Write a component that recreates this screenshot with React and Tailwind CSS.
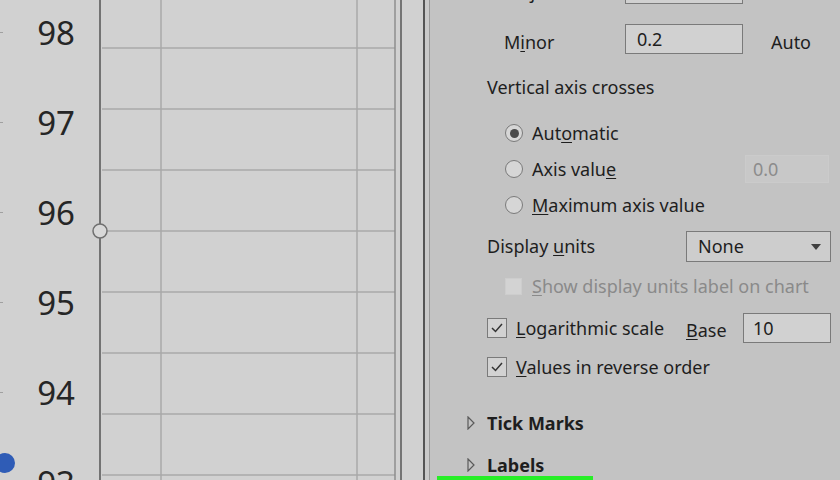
import React from 'react';

const ticks = ['98', '97', '96', '95', '94', '93'];
const gridY = [48, 109, 170, 231, 292, 353, 414, 475];

const Radio = ({ checked }) => (
  <span className="flex-none w-[18px] h-[18px] rounded-full border border-[#7a7a7a] bg-[#d6d6d6] flex items-center justify-center">
    {checked && <span className="w-[9px] h-[9px] rounded-full bg-[#4a4a4a]" />}
  </span>
);

const Check = ({ checked, disabled }) =>
  disabled ? (
    <span className="flex-none w-[17px] h-[17px] bg-[#d3d3d3] border border-[#cdcdcd]" />
  ) : (
    <span className="flex-none w-[20px] h-[20px] border border-[#7a7a7a] bg-[#d2d2d2] flex items-center justify-center">
      {checked && (
        <svg width="14" height="14" viewBox="0 0 14 14">
          <polyline points="2,7 5.5,10.5 12,3" fill="none" stroke="#333" strokeWidth="1.5" />
        </svg>
      )}
    </span>
  );

const Caret = () => (
  <svg width="8" height="14" viewBox="0 0 8 14" className="flex-none">
    <polygon points="1,1 7,7 1,13" fill="none" stroke="#5a5a5a" strokeWidth="1.2" />
  </svg>
);

const App = () => {
  return (
    <div className="w-[840px] h-[480px] overflow-hidden flex bg-[#d1d1d1] text-[#1e1e1e] font-['Noto_Sans',sans-serif] relative">
      {/* chart side */}
      <div className="flex-none w-[423px] flex relative">
        <div className="flex-none w-[100px] flex flex-col mt-[-13px]">
          {ticks.map((t) => (
            <div key={t} className="h-[90px] flex-none flex items-center justify-between pr-[25px]">
              <span className="w-[3px] h-[1px] bg-[#a0a0a0]" />
              <span className="text-[33px] leading-none text-[#262626]">{t}</span>
            </div>
          ))}
        </div>
        <svg width="323" height="480" className="flex-none overflow-visible">
          {gridY.map((y) => (
            <line key={y} x1="2" y1={y} x2="295" y2={y} stroke="#a9a9a9" strokeWidth="1.5" />
          ))}
          <line x1="61" y1="0" x2="61" y2="480" stroke="#a9a9a9" strokeWidth="1.5" />
          <line x1="257" y1="0" x2="257" y2="480" stroke="#a9a9a9" strokeWidth="1.5" />
          <line x1="295" y1="0" x2="295" y2="480" stroke="#8e8e8e" strokeWidth="1.5" />
          <line x1="301" y1="0" x2="301" y2="480" stroke="#555" strokeWidth="1.5" />
          <line x1="0" y1="0" x2="0" y2="480" stroke="#737373" strokeWidth="2" />
          <circle cx="0" cy="231" r="7" fill="#d8d8d8" stroke="#707070" strokeWidth="1.5" />
        </svg>
        <span className="absolute left-[-5px] top-[453px] w-[20px] h-[20px] rounded-full bg-[#2f5cb6]" />
      </div>

      {/* format axis pane */}
      <div className="flex-1 relative border-l-2 border-[#555] bg-[#c3c3c3] shadow-[inset_4px_0_0_#cacaca,inset_5px_0_0_#9a9a9a] text-[18px]">
        <div className="flex flex-col pl-[62px] pr-[9px]">
          <div className="h-[30px] mt-[-26px] flex items-center">
            <span className="w-[121px] ml-[17px] mt-[6px]">Major</span>
            <span className="w-[118px] h-[30px] border border-[#7a7a7a] bg-[#d1d1d1]" />
            <span className="ml-[28px] mt-[6px]">Auto</span>
          </div>
          <div className="h-[30px] mt-[20px] flex items-center">
            <span className="w-[121px] ml-[17px] mt-[6px]">
              M<u className="underline-offset-2">i</u>nor
            </span>
            <span className="w-[118px] h-[30px] border border-[#7a7a7a] bg-[#d1d1d1] flex items-center pl-[11px]">0.2</span>
            <span className="ml-[28px] mt-[6px]">Auto</span>
          </div>
          <div className="h-[24px] mt-[21px] flex items-center">Vertical axis crosses</div>
          <div className="h-[24px] mt-[22px] ml-[18px] flex items-center gap-[9px]">
            <Radio checked />
            <span>
              Aut<u className="underline-offset-2">o</u>matic
            </span>
          </div>
          <div className="h-[28px] mt-[10px] ml-[18px] flex items-center gap-[9px]">
            <Radio />
            <span>
              Axis valu<u className="underline-offset-2">e</u>
            </span>
            <span className="ml-auto mr-[2px] w-[84px] h-[28px] border border-[#cbcbcb] bg-[#c8c8c8] text-[#8c8c8c] flex items-center pl-[7px]">
              0.0
            </span>
          </div>
          <div className="h-[24px] mt-[10px] ml-[18px] flex items-center gap-[9px]">
            <Radio />
            <span>
              <u className="underline-offset-2">M</u>aximum axis value
            </span>
          </div>
          <div className="h-[31px] mt-[14px] flex items-center">
            <span>
              Display <u className="underline-offset-2">u</u>nits
            </span>
            <span className="ml-auto w-[145px] h-[31px] border border-[#7a7a7a] bg-[#cdcdcd] flex items-center justify-between pl-[11px] pr-[9px]">
              None
              <span className="w-0 h-0 border-l-[5px] border-r-[5px] border-t-[6px] border-l-transparent border-r-transparent border-t-[#404040]" />
            </span>
          </div>
          <div className="h-[24px] mt-[12px] ml-[18px] flex items-center gap-[10px] text-[#8a8a8a]">
            <Check disabled />
            <span>
              <u className="underline-offset-2">S</u>how display units label on chart
            </span>
          </div>
          <div className="h-[30px] mt-[15px] flex items-center gap-[9px]">
            <Check checked />
            <span>
              <u className="underline-offset-2">L</u>ogarithmic scale
            </span>
            <span className="ml-auto w-[145px] flex items-center justify-between">
              <span className="mt-[4px]">
                <u className="underline-offset-2">B</u>ase
              </span>
              <span className="w-[88px] h-[30px] border border-[#7a7a7a] bg-[#d1d1d1] flex items-center pl-[9px]">10</span>
            </span>
          </div>
          <div className="h-[24px] mt-[12px] flex items-center gap-[9px]">
            <Check checked />
            <span>
              <u className="underline-offset-2">V</u>alues in reverse order
            </span>
          </div>
          <div className="h-[24px] mt-[32px] ml-[-20px] flex items-center gap-[12px] font-bold">
            <Caret />
            <span>Tick Marks</span>
          </div>
          <div className="h-[24px] mt-[18px] ml-[-20px] flex items-center gap-[12px] font-bold">
            <Caret />
            <span>Labels</span>
          </div>
        </div>
        <span className="absolute left-[12px] bottom-0 w-[156px] h-[4px] bg-[#27ee27]" />
      </div>
    </div>
  );
};

export default App;
